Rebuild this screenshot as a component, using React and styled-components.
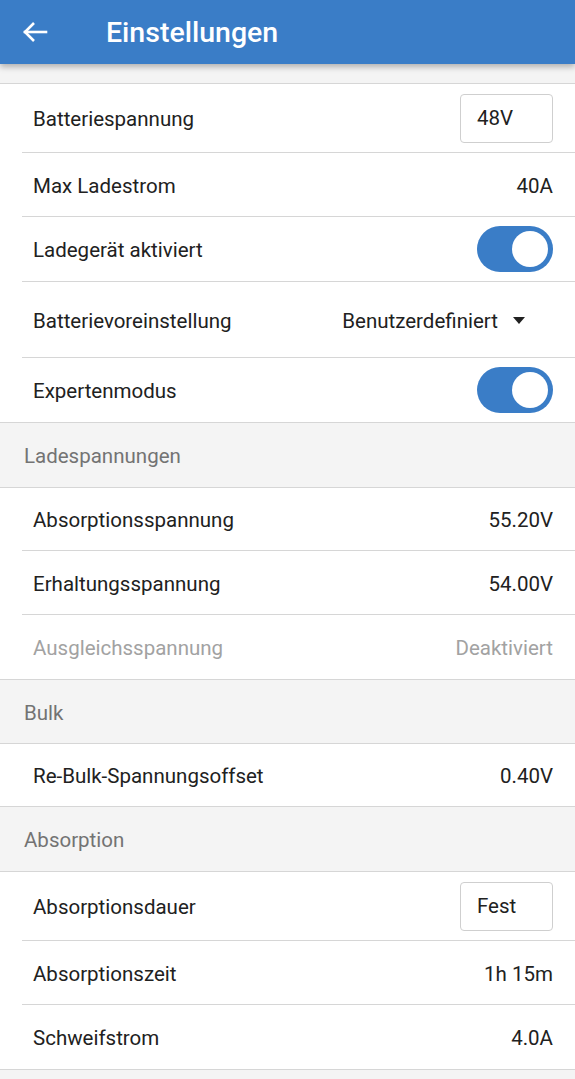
import styled, { createGlobalStyle } from 'styled-components';

const GlobalStyle = createGlobalStyle`
  html, body {
    margin: 0;
    padding: 0;
    background: #f4f4f4;
    font-family: Roboto, 'Liberation Sans', sans-serif;
  }
`;

const Page = styled.div`
  width: 575px;
  min-height: 1079px;
  background: #f4f4f4;
`;

const Header = styled.header`
  height: 64px;
  background: #3a7dc7;
  display: flex;
  align-items: center;
  padding-left: 22px;
  gap: 58px;
  box-shadow: 0 3px 6px rgba(0, 0, 0, 0.28);
  position: relative;
  z-index: 1;
`;

const BackButton = styled.button`
  border: none;
  background: none;
  padding: 0;
  width: 26px;
  height: 26px;
  display: flex;
  align-items: center;
  justify-content: center;
  cursor: pointer;
`;

const Title = styled.h1`
  margin: 0;
  color: #fff;
  font-size: 28.5px;
  font-weight: 500;
`;

const Content = styled.div`
  padding-top: 19px;
`;

const Group = styled.div`
  background: #fff;
  border-bottom: 1px solid #d6d6d6;
  border-top: ${({ $first }) => ($first ? '1px solid #d6d6d6' : 'none')};
`;

const Row = styled.div`
  display: flex;
  align-items: center;
  justify-content: space-between;
  box-sizing: border-box;
  min-height: ${({ $h }) => $h || 64}px;
  margin-left: 22px;
  padding: 2px 22px 0 11px;
  font-size: 20.5px;
  font-weight: 400;
  color: ${({ $disabled }) => ($disabled ? '#a2a2a2' : '#212121')};
  border-bottom: 1px solid #d6d6d6;

  &:last-child {
    border-bottom: none;
  }
`;

const Value = styled.span`
  color: inherit;
`;

const BoxValue = styled.div`
  box-sizing: border-box;
  width: 93px;
  height: 49px;
  margin-top: -2px;
  border: 1px solid #cfcfcf;
  border-radius: 4px;
  display: flex;
  align-items: center;
  padding-left: 16px;
  color: #212121;
`;

const Track = styled.div`
  width: 76px;
  height: 46px;
  margin-top: -2px;
  border-radius: 23px;
  background: #3a7dc7;
  display: flex;
  align-items: center;
  justify-content: ${({ $on }) => ($on ? 'flex-end' : 'flex-start')};
  padding: 0 5px;
  box-sizing: border-box;
`;

const Knob = styled.div`
  width: 36px;
  height: 36px;
  border-radius: 50%;
  background: #fff;
`;

const Select = styled.div`
  display: flex;
  align-items: center;
  gap: 15px;
  margin-right: 28px;
`;

const Caret = styled.span`
  width: 0;
  height: 0;
  border-left: 6.5px solid transparent;
  border-right: 6.5px solid transparent;
  border-top: 7px solid #212121;
`;

const Section = styled.div`
  height: ${({ $h }) => $h || 64}px;
  box-sizing: border-box;
  display: flex;
  align-items: center;
  padding: 2px 0 0 24px;
  font-size: 20.5px;
  color: #737373;
  background: #f4f4f4;
  border-bottom: 1px solid #d6d6d6;
`;

function Toggle({ on }) {
  return (
    <Track $on={on}>
      <Knob />
    </Track>
  );
}

export default function App() {
  return (
    <Page>
      <GlobalStyle />
      <Header>
        <BackButton aria-label="Zurück">
          <svg width="26" height="22" viewBox="0 0 26 22" fill="none" stroke="#fff" strokeWidth="2.6" strokeLinecap="square">
            <path d="M3 11H24" />
            <path d="M12 2L3 11L12 20" strokeLinecap="butt" />
          </svg>
        </BackButton>
        <Title>Einstellungen</Title>
      </Header>
      <Content>
        <Group $first>
          <Row $h={69}>
            <span>Batteriespannung</span>
            <BoxValue>48V</BoxValue>
          </Row>
          <Row>
            <span>Max Ladestrom</span>
            <Value>40A</Value>
          </Row>
          <Row $h={65}>
            <span>Ladegerät aktiviert</span>
            <Toggle on />
          </Row>
          <Row $h={76}>
            <span>Batterievoreinstellung</span>
            <Select>
              <span>Benutzerdefiniert</span>
              <Caret />
            </Select>
          </Row>
          <Row>
            <span>Expertenmodus</span>
            <Toggle on />
          </Row>
        </Group>
        <Section $h={65}>Ladespannungen</Section>
        <Group>
          <Row $h={63}>
            <span>Absorptionsspannung</span>
            <Value>55.20V</Value>
          </Row>
          <Row>
            <span>Erhaltungsspannung</span>
            <Value>54.00V</Value>
          </Row>
          <Row $disabled>
            <span>Ausgleichsspannung</span>
            <Value>Deaktiviert</Value>
          </Row>
        </Group>
        <Section>Bulk</Section>
        <Group>
          <Row $h={62}>
            <span>Re-Bulk-Spannungsoffset</span>
            <Value>0.40V</Value>
          </Row>
        </Group>
        <Section $h={65}>Absorption</Section>
        <Group>
          <Row $h={69}>
            <span>Absorptionsdauer</span>
            <BoxValue>Fest</BoxValue>
          </Row>
          <Row>
            <span>Absorptionszeit</span>
            <Value>1h 15m</Value>
          </Row>
          <Row>
            <span>Schweifstrom</span>
            <Value>4.0A</Value>
          </Row>
        </Group>
      </Content>
    </Page>
  );
}
